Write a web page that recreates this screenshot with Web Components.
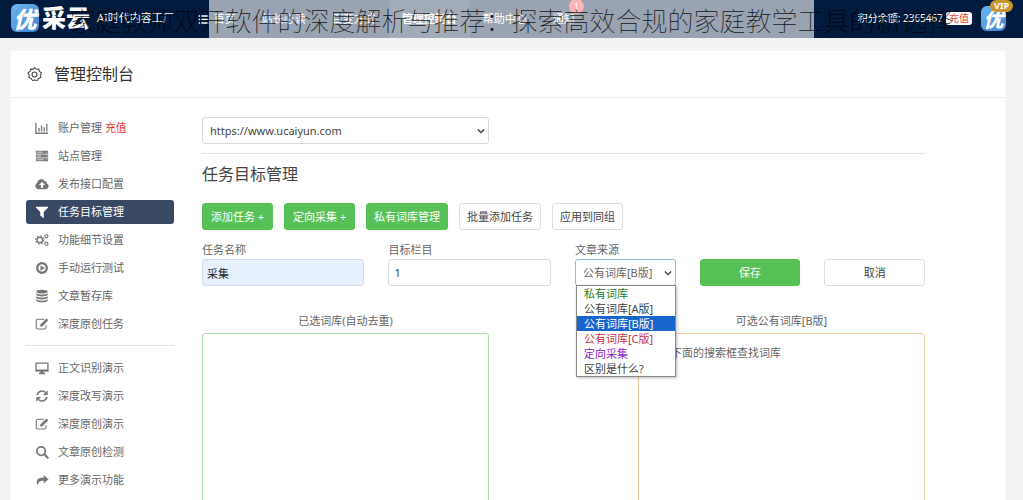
<!DOCTYPE html>
<html lang="zh-CN">
<head>
<meta charset="utf-8">
<title>管理控制台</title>
<style>
  body { margin: 0; background: #f2f3f3; color: #666; font: 11px/16px "Noto Sans", "Noto Sans CJK SC", sans-serif; overflow: hidden; height: 100vh; }
</style>
</head>
<body>
<uc-app></uc-app>
<script>
const ICONS = {
  chart: '<path d="M1 2v12h14M4.500 12V8M7.500 12V5M10.500 12V7M13.500 12V3" fill="none" stroke="currentColor" stroke-width="1.500"/>',
  server: '<path d="M1 2h14v3.300H1zM1 6.300h14v3.300H1zM1 10.600h14v3.300H1z" fill="currentColor"/><path d="M2 3.600h7M2 8h5M2 12.300h8" stroke="#fff" stroke-width=".8"/><path d="M13 3.600h1M13 8h1M13 12.300h1" stroke="#fff"/>',
  cloud: '<path fill="currentColor" fill-rule="evenodd" d="M4 14a4 4 0 0 1-1.500-7.500A4.600 4.600 0 0 1 11 4.500 2.700 2.700 0 0 1 13.500 7.500 3.400 3.400 0 0 1 12.500 14zM8 5.500 4.500 9.200h2.300v3h2.400v-3h2.300z"/>',
  filter: '<path fill="currentColor" d="M1.500 2h13c.5 0 .6.600.3 1L10 8v7l-4-3V8L1.200 3c-.3-.4-.2-1 .3-1z"/>',
  cogs: '<g fill="none" stroke="currentColor"><circle cx="5.500" cy="8" r="3.200" stroke-width="1.600"/><circle cx="5.500" cy="8" r="4.700" stroke-width="1.300" stroke-dasharray="1.900 1.790"/><circle cx="13" cy="3.800" r="1.800" stroke-width="1.300"/><circle cx="13" cy="12.200" r="1.800" stroke-width="1.300"/></g>',
  play: '<circle cx="8" cy="8" r="5.500" fill="none" stroke="currentColor" stroke-width="2.600"/><path d="m6.300 5 5 3-5 3z" fill="currentColor"/>',
  db: '<g fill="currentColor"><ellipse cx="8" cy="3" rx="6.500" ry="2.200"/><path d="M1.500 4.800c2 2 11 2 13 0v2c-2 2.200-11 2.200-13 0zM1.500 8.300c2 2 11 2 13 0v2c-2 2.200-11 2.200-13 0zM1.500 11.800c2 2 11 2 13 0V13c-1 3-12 3-13 0z"/></g>',
  edit: '<path d="M10.500 2.500H3a1.600 1.600 0 0 0-1.600 1.600V12A1.600 1.600 0 0 0 3 13.600h8a1.600 1.600 0 0 0 1.600-1.600V9.500" fill="none" stroke="currentColor" stroke-width="1.200"/><path fill="currentColor" d="m13.200 1.800 2 2-7 7H6V8.700z"/>',
  desktop: '<path d="M1.200 2.400h13.600v8.800H1.200z" fill="none" stroke="currentColor" stroke-width="1.500"/><path d="M1 9.700h14v2H1zM6.500 11.500h3l.5 2h1.500V15h-7v-1.500H6z" fill="currentColor"/>',
  refresh: '<path d="M2.500 7A5.600 5.600 0 0 1 12 4M13.500 9A5.600 5.600 0 0 1 4 12" fill="none" stroke="currentColor" stroke-width="1.900"/><path d="M14.500 1.500v5.300H9.200zM1.500 14.500V9.200h5.300z" fill="currentColor"/>',
  search: '<circle cx="7" cy="7" r="4.800" fill="none" stroke="currentColor" stroke-width="2"/><path d="m10.500 10.500 4 4" stroke="currentColor" stroke-width="2.400" stroke-linecap="round"/>',
  share: '<path fill="currentColor" d="M10 2.200 15.500 7 10 11.800V9C5.500 8.800 3.500 10 3.600 13.800 1 11 .3 5.200 10 5z"/>',
  gear: '<g fill="none" stroke="currentColor" stroke-width="1.100"><path d="m8 .8 2 1.700 2.600-.2.600 2.500 2.200 1.400L14.400 8.600l.4 2.600-2.400 1-1.400 2.200-2.600-.6-2.600.6-1.400-2.200-2.400-1 .4-2.600L1 6.200l2.200-1.400.6-2.500 2.600.2z"/><circle cx="8" cy="8" r="2.600"/></g>',
  list: '<path d="M1 3h2M1 8h2M1 13h2M5 3h10M5 8h10M5 13h10" stroke="currentColor" stroke-width="2.200"/>',
  chevron: '<path d="m3 5.500 5 5 5-5" fill="none" stroke="currentColor" stroke-width="2.200"/>'
};

function define(name, html, setup) {
  const tpl = document.createElement('template');
  tpl.innerHTML = html;
  customElements.define(name, class extends HTMLElement {
    constructor() {
      super();
      this.attachShadow({ mode: 'open' }).append(tpl.content.cloneNode(true));
    }
    connectedCallback() { if (setup) setup(this, this.shadowRoot); }
  });
}

define('uc-icon', `<style>
  :host { display: inline-block; width: 14px; height: 14px; flex: none; }
  svg { display: block; width: 100%; height: 100%; }
</style><svg viewBox="0 0 16 16" aria-hidden="true"></svg>`,
(el, root) => { root.querySelector('svg').innerHTML = ICONS[el.getAttribute('name')] || ''; });

define('uc-button', `<style>
  :host { display: block; min-width: 71px; }
  button { box-sizing: border-box; width: 100%; height: 27px; padding: 0 7px; border: 1px solid #ddd; border-radius: 3px; background: #fff; color: #444; font: inherit; white-space: nowrap; }
  :host([primary]) button { background: #57c157; border-color: #57c157; color: #fff; }
</style><button type="button"><slot></slot></button>`);

define('uc-input', `<style>
  :host { display: block; min-width: 0; }
  label { display: block; margin-bottom: 1px; }
  input { box-sizing: border-box; display: block; width: 100%; height: 27px; padding: 0 5px; border: 1px solid #d9dde3; border-radius: 3px; background: #fff; color: #444; font: inherit; }
  :host([filled]) input { background: #e7f0fd; color: #222; border-color: #d3dcec; padding: 0 4px; }
</style><label for="f"></label><input id="f" type="text">`,
(el, root) => {
  root.querySelector('label').textContent = el.getAttribute('label');
  root.querySelector('input').value = el.getAttribute('value');
});

define('uc-select', `<style>
  :host { display: block; position: relative; min-width: 0; }
  label { display: block; margin-bottom: 1px; }
  .box { position: relative; }
  select { appearance: none; box-sizing: border-box; display: block; width: 100%; height: 27px; padding: 0 20px 0 7px; border: 1px solid #d9d9d9; border-radius: 3px; background: #fff; color: #444; font: inherit; }
  :host([open]) select { border-color: #8fbfe0; color: #666; }
  uc-icon { position: absolute; right: 3px; top: 9px; width: 10px; height: 10px; color: #444; pointer-events: none; }
  ::slotted(ul) { position: absolute; z-index: 2; top: 100%; left: 1px; right: 0; margin: -1px 0 0; padding: 0; list-style: none; background: #fff; border: 1px solid #888; box-shadow: 1px 1px 3px #0004; color: #444; line-height: 15px; }
</style><label for="s"></label><div class="box"><select id="s"></select><uc-icon name="chevron"></uc-icon></div><slot></slot>`,
(el, root) => {
  const label = root.querySelector('label'), select = root.querySelector('select');
  if (el.hasAttribute('label')) label.textContent = el.getAttribute('label');
  else { label.remove(); select.setAttribute('aria-label', '站点'); }
  select.add(new Option(el.getAttribute('value')));
});

define('uc-nav-item', `<style>
  :host { display: block; }
  a { display: flex; align-items: center; height: 24px; padding: 0 9px; gap: 9px; border-radius: 3px; color: #666; text-decoration: none; white-space: nowrap; }
  uc-icon { color: #777; }
  :host([active]) a { background: #394963; color: #fff; }
  :host([active]) uc-icon { color: #fff; }
</style><a href="#"><uc-icon></uc-icon><span><slot></slot></span></a>`,
(el, root) => {
  const icon = root.querySelector('uc-icon');
  icon.setAttribute('name', el.getAttribute('icon'));
  icon.connectedCallback();
});

define('uc-sidebar', `<style>
  :host { display: block; width: 148px; flex: none; }
  nav { display: flex; flex-direction: column; gap: 4px; padding-top: 2px; }
  hr { width: 100%; margin: 5px 0 6px; border: 0; border-top: 1px solid #e3e3e3; }
  b { font-weight: 400; color: #e23c3c; }
</style>
<nav>
  <uc-nav-item icon="chart">账户管理 <b>充值</b></uc-nav-item>
  <uc-nav-item icon="server">站点管理</uc-nav-item>
  <uc-nav-item icon="cloud">发布接口配置</uc-nav-item>
  <uc-nav-item icon="filter" active>任务目标管理</uc-nav-item>
  <uc-nav-item icon="cogs">功能细节设置</uc-nav-item>
  <uc-nav-item icon="play">手动运行测试</uc-nav-item>
  <uc-nav-item icon="db">文章暂存库</uc-nav-item>
  <uc-nav-item icon="edit">深度原创任务</uc-nav-item>
  <hr>
  <uc-nav-item icon="desktop">正文识别演示</uc-nav-item>
  <uc-nav-item icon="refresh">深度改写演示</uc-nav-item>
  <uc-nav-item icon="edit">深度原创演示</uc-nav-item>
  <uc-nav-item icon="search">文章原创检测</uc-nav-item>
  <uc-nav-item icon="share">更多演示功能</uc-nav-item>
</nav>`);

define('uc-logo', `<style>
  :host { display: grid; place-items: center; width: 28px; height: 28px; flex: none; border-radius: 6px; background: linear-gradient(135deg, #70b5ee, #3d83d0); color: #fff; font: italic 900 23px/28px "Noto Sans CJK SC", sans-serif; }
  :host([small]) { width: 25px; height: 25px; font-size: 20px; line-height: 25px; }
</style><slot></slot>`);

define('uc-header', `<style>
  :host { display: block; position: relative; height: 38px; background: #001b3d; color: #fff; white-space: nowrap; overflow: hidden; }
  .bar { display: flex; align-items: center; height: 36px; padding: 0 17px 0 11px; }
  .name { margin-left: 3px; font-size: 24px; font-weight: 900; line-height: 28px; }
  .slogan { margin-left: 7px; font-size: 11px; }
  nav { display: flex; align-self: stretch; margin-left: 11px; }
  nav a { display: flex; align-items: center; gap: 5px; height: 38px; padding: 0 13px; color: #fff; text-decoration: none; }
  nav a.on { background: #173052; font-weight: 700; }
  nav uc-icon { width: 11px; height: 11px; }
  .alert { position: relative; }
  .alert i { position: absolute; top: -1px; right: 4px; width: 15px; height: 15px; border-radius: 8px; background: #f44; font: 9px/16px "Noto Sans", sans-serif; text-align: center; }
  .points { margin-left: auto; margin-right: 3px; font-size: 10px; }
  .charge { margin-right: 9px; padding: 0 3px; border-radius: 3px; background: #fff; color: #d44; font-size: 10px; line-height: 13px; text-decoration: none; }
  .user { position: relative; }
  .vip { position: absolute; right: -7px; top: -6px; padding: 0 4px; border-radius: 6px; background: #c8952e; color: #fff; font: 700 9px/12px "Noto Sans", sans-serif; }
  .veil { position: absolute; inset: 0 209px; background: #fff9; }
  h1 { position: absolute; inset: 0; margin: 0; color: #000; opacity: .85; font: 100 26px/40px "Noto Sans CJK SC", sans-serif; text-align: center; }
</style>
<div class="bar">
  <uc-logo>优</uc-logo><span class="name">采云</span><span class="slogan">AI时代内容工厂</span>
  <nav>
    <a href="#"><uc-icon name="list"></uc-icon>首页</a>
    <a href="#">站长必读</a>
    <a href="#">百变方式</a>
    <a href="#" class="on">管理控制台</a>
    <a href="#">帮助中心</a>
    <a href="#" class="alert">通知<i>1</i></a>
  </nav>
  <span class="points">积分余额: 2365467</span><a class="charge" href="#">充值</a>
  <span class="user"><uc-logo small>优</uc-logo><span class="vip">VIP</span></span>
</div>
<div class="veil"></div>
<h1>家庭教师双开软件的深度解析与推荐：探索高效合规的家庭教学工具的新选择</h1>`);

define('uc-tasks', `<style>
  :host { display: block; flex: 1; min-width: 0; }
  .site { width: 287px; }
  hr { margin: 9px 0 10px; border: 0; border-top: 1px solid #e3e3e3; }
  h3 { margin: 0; font-size: 16px; line-height: 20px; font-weight: 400; color: #444; }
  .actions { display: flex; gap: 11px; margin-top: 19px; }
  .form { display: grid; grid-template-columns: 163fr 163fr 101fr 101fr 101fr; gap: 24px; align-items: end; margin-top: 12px; }
  .banks { display: grid; grid-template-columns: 1fr 1fr; gap: 149px; margin-top: 27px; }
  h4 { margin: 0 0 4px; font: inherit; text-align: center; }
  .bank { box-sizing: border-box; height: 210px; padding: 11px 10px; border: 1px solid #a9dba9; border-radius: 3px; }
  .bank.open { border-color: #efc9a0; }
  li { padding-left: 7px; }
  .on { background: #1766cb; color: #fff; }
</style>
<uc-select class="site" value="https://www.ucaiyun.com"></uc-select>
<hr>
<h3>任务目标管理</h3>
<div class="actions">
  <uc-button primary>添加任务 +</uc-button>
  <uc-button primary>定向采集 +</uc-button>
  <uc-button primary>私有词库管理</uc-button>
  <uc-button>批量添加任务</uc-button>
  <uc-button>应用到同组</uc-button>
</div>
<form class="form">
  <uc-input filled label="任务名称" value="采集"></uc-input>
  <uc-input label="目标栏目" value="1"></uc-input>
  <uc-select open label="文章来源" value="公有词库[B版]">
    <ul role="listbox" aria-label="文章来源">
      <li role="option" style="color:#1d7d1d">私有词库</li>
      <li role="option">公有词库[A版]</li>
      <li role="option" class="on" aria-selected="true">公有词库[B版]</li>
      <li role="option" style="color:#c8323c">公有词库[C版]</li>
      <li role="option" style="color:#8a1fd0">定向采集</li>
      <li role="option">区别是什么?</li>
    </ul>
  </uc-select>
  <uc-button primary>保存</uc-button>
  <uc-button>取消</uc-button>
</form>
<div class="banks">
  <section><h4>已选词库(自动去重)</h4><div class="bank"></div></section>
  <section><h4>可选公有词库[B版]</h4><div class="bank open">请用下面的搜索框查找词库</div></section>
</div>`);

define('uc-app', `<style>
  :host { display: block; }
  main { margin: 13px 18px 0 11px; background: #fff; }
  .head { display: flex; align-items: center; gap: 12px; height: 46px; padding-left: 16px; border-bottom: 1px solid #eee; }
  .head uc-icon { width: 15px; height: 15px; color: #444; }
  h2 { margin: 0; font-size: 16px; line-height: 24px; font-weight: 400; color: #333; }
  .body { display: flex; gap: 28px; padding: 16px 80px 0 15px; }
  uc-tasks { margin-top: 3px; }
</style>
<uc-header></uc-header>
<main>
  <div class="head"><uc-icon name="gear"></uc-icon><h2>管理控制台</h2></div>
  <div class="body"><uc-sidebar></uc-sidebar><uc-tasks></uc-tasks></div>
</main>`);
</script>
</body>
</html>
